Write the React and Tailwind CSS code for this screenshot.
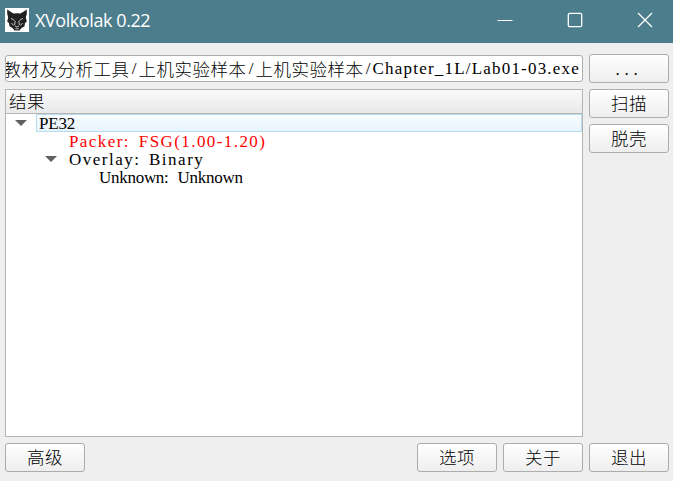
import React from 'react';

const cjk = "font-['Noto_Sans_CJK_SC',sans-serif] text-[17.5px] font-light tracking-[0.5px]";

function Button({ children, dots }) {
  return (
    <button className="flex h-[29px] w-20 shrink-0 items-center justify-center rounded-[3px] border border-[#adadad] bg-linear-to-b from-white to-[#eeeeee] text-black">
      {dots ? (
        <span className="pt-0.5 tracking-[4.7px]">{children}</span>
      ) : (
        <span className={cjk + ' pb-0.5 leading-[25px]'}>{children}</span>
      )}
    </button>
  );
}

function Arrow() {
  return (
    <svg width="12" height="6" viewBox="0 0 12 6" className="shrink-0">
      <path d="M0 0H12L6 6Z" fill="#606060" />
    </svg>
  );
}

function WolfLogo() {
  return (
    <svg width="24" height="24" viewBox="0 0 24 24" className="shrink-0 bg-white">
      <path
        d="M2.2 1.5L8.4 5.6Q12 4.8 15.6 5.6L21.8 1.5Q22.2 6 20.8 9.5L21.8 13.5L20 15L19.5 18.3L16.5 20L14.5 22.6H9.5L7.5 20L4.5 18.3L4 15L2.2 13.5L3.2 9.5Q1.8 6 2.2 1.5Z"
        fill="#202020"
      />
      <path
        d="M6 10.4L9.6 12.4M18 10.4L14.4 12.4M10.2 13L9.6 17M13.8 13L14.4 17M6.5 15L8.5 17.5M17.5 15L15.5 17.5M10 18L12 19L14 18M10.3 20.8H13.7"
        fill="none"
        stroke="#c4c4c4"
        strokeWidth="1"
      />
    </svg>
  );
}

function TitleBar() {
  return (
    <header className="flex h-[43px] items-center bg-[#4c7d8d] pb-[3px] pl-[5px] text-white">
      <WolfLogo />
      <h1 className="ml-1.5 font-['Open_Sans',sans-serif] text-[18px] leading-6 tracking-[-0.42px]">XVolkolak 0.22</h1>
      <div className="ml-auto mr-5 flex gap-[54px]">
        <svg width="16" height="16" viewBox="0 0 16 16" fill="none" stroke="white">
          <path d="M0.5 8.5H15.5" />
        </svg>
        <svg width="16" height="16" viewBox="0 0 16 16" fill="none" stroke="white" strokeWidth="1.3">
          <rect x="1.3" y="1.3" width="13.4" height="13.4" rx="1.5" />
        </svg>
        <svg width="16" height="16" viewBox="0 0 16 16" fill="none" stroke="white" strokeWidth="1.25">
          <path d="M1 1L15 15M15 1L1 15" />
        </svg>
      </div>
    </header>
  );
}

export default function App() {
  return (
    <div className="flex h-[481px] w-[673px] flex-col overflow-hidden bg-[#efefef] font-['Liberation_Serif',serif] text-[17px] text-black">
      <TitleBar />
      <main className="flex grow gap-1.5 pl-[5px] pr-1 pt-[11px]">
        <section className="flex w-[578px] flex-col">
          <div className="mt-px flex h-[27px] items-center justify-end overflow-hidden whitespace-nowrap rounded-[3px] border border-[#adadad] bg-white pr-[2px] leading-[25px]">
            <span className={cjk + ' leading-[25px]'}>教材及分析工具</span>
            <span className="w-[9px] shrink-0 text-center">/</span>
            <span className={cjk + ' leading-[25px]'}>上机实验样本</span>
            <span className="w-[9px] shrink-0 text-center">/</span>
            <span className={cjk + ' leading-[25px]'}>上机实验样本</span>
            <span className="w-[9px] shrink-0 text-center">/</span>
            <span className="tracking-[1.2px]">Chapter_1L/Lab01-03.exe</span>
          </div>
          <div className="mt-[7px] h-[348px] border border-[#b4b4b4] bg-white">
            <div className="h-6 border-b border-[#b4b4b4] bg-linear-to-b from-[#fafafa] to-[#e9e9e9] pl-[3px]">
              <span className={cjk + ' block leading-[22px]'}>结果</span>
            </div>
            <ul className="leading-[18px]">
              <li className="flex h-[18px] items-center pl-[9px]">
                <Arrow />
                <span className="ml-[9px] h-[18px] grow border border-[#b9dcf1] bg-linear-to-b from-[#f8fcff] to-[#e7f4fd] pl-[2px] leading-[17px] tracking-[-0.2px]">PE32</span>
              </li>
              <li className="h-[18px] pl-[63px] leading-5 tracking-[1.42px] text-[#ff0000] [word-spacing:3.2px]">Packer: FSG(1.00-1.20)</li>
              <li className="flex h-[18px] items-center pl-[39px]">
                <Arrow />
                <span className="ml-3 pt-px tracking-[1.5px] [word-spacing:2.8px]">Overlay: Binary</span>
              </li>
              <li className="h-[18px] pl-[93px] leading-5 tracking-[-0.28px] [word-spacing:5px]">Unknown: Unknown</li>
            </ul>
          </div>
        </section>
        <aside className="flex flex-col gap-1.5">
          <Button dots>...</Button>
          <Button>扫描</Button>
          <Button>脱壳</Button>
        </aside>
      </main>
      <footer className="flex h-[38px] items-start gap-1.5 pl-[5px] pr-1">
        <Button>高级</Button>
        <div className="ml-auto flex gap-1.5">
          <Button>选项</Button>
          <Button>关于</Button>
          <Button>退出</Button>
        </div>
      </footer>
    </div>
  );
}
